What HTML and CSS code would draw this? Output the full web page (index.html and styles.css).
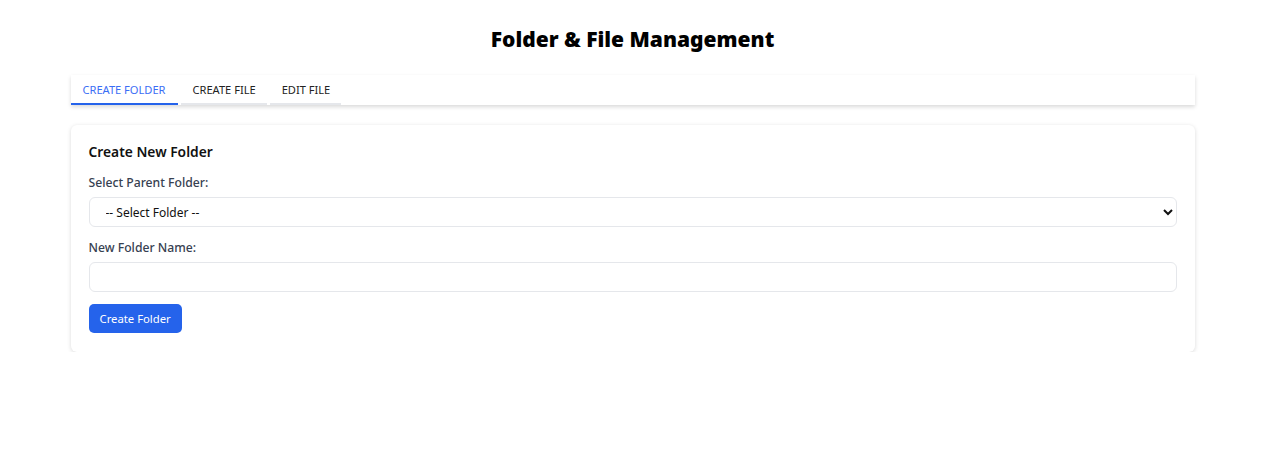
FILE: index.html
```html
<!DOCTYPE html>
<html lang="en">
<head>
    <meta charset="UTF-8">
    <meta name="viewport" content="width=device-width, initial-scale=1.0">
    <title>Folder &amp; File Management</title>
    <link rel="stylesheet" href="styles.css">
</head>
<body>
    <div class="container">
        <h1 class="page-title">Folder &amp; File Management</h1>

        <div class="tabs">
            <button class="tab active">CREATE FOLDER</button>
            <button class="tab">CREATE FILE</button>
            <button class="tab">EDIT FILE</button>
        </div>

        <form class="panel">
            <h2>Create New Folder</h2>
            <div class="form-group">
                <label for="parentFolder">Select Parent Folder:</label>
                <select id="parentFolder">
                    <option value="">-- Select Folder --</option>
                </select>
            </div>
            <div class="form-group">
                <label for="folderName">New Folder Name:</label>
                <input type="text" id="folderName">
            </div>
            <button type="submit" class="submit-btn">Create Folder</button>
        </form>
    </div>
</body>
</html>
```

FILE: styles.css
```css
* {
    margin: 0;
    padding: 0;
    box-sizing: border-box;
    font-family: 'Noto Sans', 'Open Sans', sans-serif;
}

body {
    background: #fff;
    padding-right: 15px;
}

.container {
    max-width: 1124px;
    margin: 0 auto;
    padding-top: 25px;
}

.page-title {
    text-align: center;
    font-size: 21px;
    font-weight: 900;
    color: #000;
    line-height: 28px;
    margin-bottom: 22px;
}

.tabs {
    display: flex;
    gap: 3px;
    background: #fff;
    box-shadow: 0 2px 4px rgba(0,0,0,0.15);
    height: 30px;
    margin-bottom: 20px;
}

.tab {
    background: none;
    border: none;
    border-bottom: 2px solid #e5e7eb;
    padding: 0 11px 0 12px;
    font-size: 11.1px;
    color: #222;
    cursor: pointer;
}

.tab.active {
    padding: 0 12px;
    color: #3b6ef5;
    border-bottom-color: #2563eb;
}

.panel {
    background: #fff;
    border-radius: 6px;
    box-shadow: 0 1px 4px rgba(0,0,0,0.15);
    padding: 17px 18px 19px;
}

.panel h2 {
    font-size: 13.8px;
    font-weight: 600;
    color: #111;
    margin-bottom: 13px;
}

.form-group {
    margin-bottom: 12px;
}

label {
    display: block;
    font-size: 12.2px;
    font-weight: 500;
    color: #374151;
    margin-bottom: 6px;
}

select, input {
    width: 100%;
    height: 30px;
    border: 1px solid #e5e7eb;
    border-radius: 6px;
    background: #fff;
    font-size: 12px;
    color: #111;
}

select {
    padding: 0 12px;
}

.submit-btn {
    background: #2563eb;
    color: #fff;
    border: none;
    border-radius: 5px;
    height: 29px;
    padding: 0 11px;
    font-size: 11.3px;
    cursor: pointer;
}

.submit-btn:hover {
    background: #1d4ed8;
}
```
